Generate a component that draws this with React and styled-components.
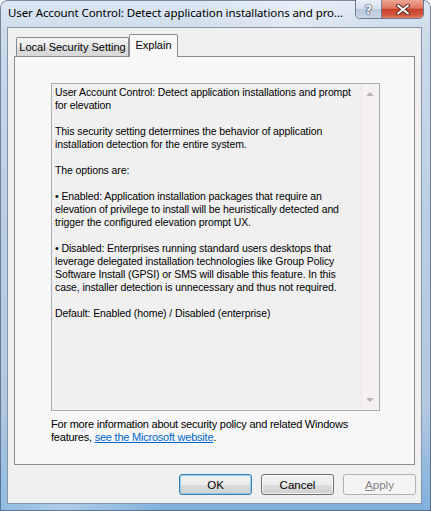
import styled, { createGlobalStyle } from "styled-components";

const GlobalStyle = createGlobalStyle`
  html, body {
    margin: 0;
    padding: 0;
    background: #ffffff;
  }
  body {
    font-family: "Liberation Sans", Arial, sans-serif;
  }
`;

const explainText = [
  ["User Account Control: Detect application installations and prompt", "for elevation"],
  ["This security setting determines the behavior of application", "installation detection for the entire system."],
  ["The options are:"],
  [
    "\u2022 Enabled: Application installation packages that require an",
    "elevation of privilege to install will be heuristically detected and",
    "trigger the configured elevation prompt UX.",
  ],
  [
    "\u2022 Disabled: Enterprises running standard users desktops that",
    "leverage delegated installation technologies like Group Policy",
    "Software Install (GPSI) or SMS will disable this feature. In this",
    "case, installer detection is unnecessary and thus not required.",
  ],
  ["Default: Enabled (home) / Disabled (enterprise)"],
];

const App = () => {
  return (
    <>
      <GlobalStyle />
      <Window>
        <TitleBar>
          <Title>User Account Control: Detect application installations and pro...</Title>
          <CaptionButtons>
            <HelpButton>?</HelpButton>
            <CloseButton>
              <svg width="14" height="11" viewBox="0 0 14 11">
                <path d="M2 1.5 L12 9.5 M12 1.5 L2 9.5" stroke="#5a2a22" strokeWidth="4" strokeLinecap="round" />
                <path d="M2 1.5 L12 9.5 M12 1.5 L2 9.5" stroke="#ffffff" strokeWidth="2" strokeLinecap="round" />
              </svg>
            </CloseButton>
          </CaptionButtons>
        </TitleBar>

        <Client>
          <TabRow>
            <Tab $width={113}>Local Security Setting</Tab>
            <Tab $width={49} $active>Explain</Tab>
          </TabRow>

          <TabPanel>
            <TextBox>
              <TextContent>
                {explainText.map((para, i) => (
                  <Paragraph key={i}>
                    {para.map((line, j) => (
                      <Line key={j}>{line}</Line>
                    ))}
                  </Paragraph>
                ))}
              </TextContent>
              <Scrollbar>
                <Arrow $up />
                <Arrow />
              </Scrollbar>
            </TextBox>

            <Info>
              <Line>For more information about security policy and related Windows</Line>
              <Line>
                features, <Link href="#">see the Microsoft website</Link>.
              </Line>
            </Info>
          </TabPanel>

          <ButtonRow>
            <Button $default>OK</Button>
            <Button>Cancel</Button>
            <Button disabled>
              <u>A</u>pply
            </Button>
          </ButtonRow>
        </Client>
      </Window>
    </>
  );
};

export default App;

const Window = styled.div`
  box-sizing: border-box;
  width: 431px;
  height: 511px;
  display: flex;
  flex-direction: column;
  padding: 0 9px 7px 7px;
  border-radius: 7px 7px 0 0;
  box-shadow: inset 0 0 0 1px rgba(40, 60, 90, 0.55);
  background:
    linear-gradient(115deg, rgba(255, 255, 255, 0) 30%, rgba(255, 255, 255, 0.35) 45%, rgba(255, 255, 255, 0) 60%),
    linear-gradient(180deg, #dde8f4 0%, #cddbea 6%, #bccfe3 40%, #b2c8e0 80%, #7fb0dc 100%);
`;

const TitleBar = styled.div`
  height: 27px;
  display: flex;
  align-items: flex-start;
  flex-shrink: 0;
`;

const Title = styled.div`
  margin-top: 5px;
  padding-left: 1px;
  font-family: "Noto Sans", "Liberation Sans", sans-serif;
  font-size: 11.5px;
  line-height: 16px;
  color: #000;
  white-space: nowrap;
  letter-spacing: -0.1px;
`;

const CaptionButtons = styled.div`
  margin-left: auto;
  margin-right: -2px;
  display: flex;
  height: 18px;
  border: 1px solid rgba(40, 55, 75, 0.6);
  border-top: none;
  border-radius: 0 0 5px 5px;
  overflow: hidden;
`;

const HelpButton = styled.div`
  width: 25px;
  display: flex;
  align-items: center;
  justify-content: center;
  font-family: "DejaVu Sans", sans-serif;
  font-size: 13px;
  font-weight: bold;
  color: #f4f8fc;
  text-shadow: 0 0 1px #2b3a4c, 0 0 1px #2b3a4c, 0 0 2px #3b4a5c;
  background: linear-gradient(180deg, #e9eff6 0%, #d6e0ec 48%, #b9c8d9 52%, #c8d6e6 100%);
  border-right: 1px solid rgba(40, 55, 75, 0.55);
`;

const CloseButton = styled.div`
  width: 41px;
  display: flex;
  align-items: center;
  justify-content: center;
  background: linear-gradient(180deg, #eda595 0%, #df7660 45%, #c8402a 52%, #d25a40 85%, #e3826a 100%);
`;

const Client = styled.div`
  flex: 1;
  display: flex;
  flex-direction: column;
  padding: 6px 6px 8px 6px;
  background: #f0f0f0;
  border: 1px solid #8595a8;
`;

const TabRow = styled.div`
  display: flex;
  align-items: flex-end;
  height: 23px;
  margin-left: 2px;
  position: relative;
  z-index: 1;
`;

const Tab = styled.div`
  box-sizing: border-box;
  width: ${(p) => p.$width}px;
  height: ${(p) => (p.$active ? 23 : 19)}px;
  margin-bottom: ${(p) => (p.$active ? 0 : 1)}px;
  display: flex;
  align-items: center;
  justify-content: center;
  padding-bottom: ${(p) => (p.$active ? 3 : 0)}px;
  border: 1px solid #898c95;
  border-bottom: none;
  border-radius: 2px 2px 0 0;
  background: ${(p) =>
    p.$active ? "#f7f7f7" : "linear-gradient(180deg, #f4f4f4 0%, #ebebeb 50%, #dddddd 51%, #d9d9d9 100%)"};
  font-size: 11px;
  color: #000;
  white-space: nowrap;
`;

const TabPanel = styled.div`
  box-sizing: border-box;
  height: 409px;
  margin-top: -1px;
  padding: 26px 0 0 36px;
  background: #f7f7f7;
  border: 1px solid #898c95;
  display: flex;
  flex-direction: column;
`;

const TextBox = styled.div`
  box-sizing: border-box;
  width: 329px;
  height: 328px;
  display: flex;
  background: #f0f0f0;
  border: 1px solid #abadb3;
  border-top-color: #a5a9b2;
`;

const TextContent = styled.div`
  flex: 1;
  padding: 2px 0 0 3px;
  font-size: 10.5px;
  line-height: 13px;
  letter-spacing: -0.1px;
  color: #000;
`;

const Paragraph = styled.div`
  margin-bottom: 13px;
`;

const Line = styled.div`
  white-space: nowrap;
`;

const Scrollbar = styled.div`
  width: 16px;
  display: flex;
  flex-direction: column;
  justify-content: space-between;
  align-items: center;
  padding: 8px 0 8px;
  background: #f5f1f0;
  border-left: 1px solid #e8e4e3;
  margin-right: 1px;
`;

const Arrow = styled.div`
  width: 0;
  height: 0;
  border-left: 4px solid transparent;
  border-right: 4px solid transparent;
  ${(p) => (p.$up ? "border-bottom: 4px solid #b5b5b5;" : "border-top: 4px solid #b5b5b5;")}
`;

const Info = styled.div`
  margin-top: 7px;
  font-size: 11px;
  line-height: 13px;
  letter-spacing: -0.22px;
  color: #000;
`;

const Link = styled.a`
  color: #0066cc;
  text-decoration: underline;
`;

const ButtonRow = styled.div`
  display: flex;
  justify-content: flex-end;
  gap: 9px;
  margin-top: 9px;
  margin-right: -1px;
`;

const Button = styled.button`
  box-sizing: border-box;
  width: 73px;
  height: 21px;
  padding: 0;
  font-family: "Liberation Sans", Arial, sans-serif;
  font-size: 11.5px;
  color: #000;
  border-radius: 3px;
  border: 1px solid ${(p) => (p.$default ? "#3c7fb1" : "#707070")};
  background: linear-gradient(180deg, #f2f2f2 0%, #ebebeb 50%, #dddddd 51%, #cfcfcf 100%);
  box-shadow: inset 0 0 0 1px ${(p) => (p.$default ? "rgba(120, 200, 240, 0.8)" : "rgba(255, 255, 255, 0.7)")};

  &:disabled {
    color: #838383;
    border-color: #adb2b5;
    background: #f4f4f4;
    box-shadow: none;
  }

  u {
    text-decoration: underline;
  }
`;
